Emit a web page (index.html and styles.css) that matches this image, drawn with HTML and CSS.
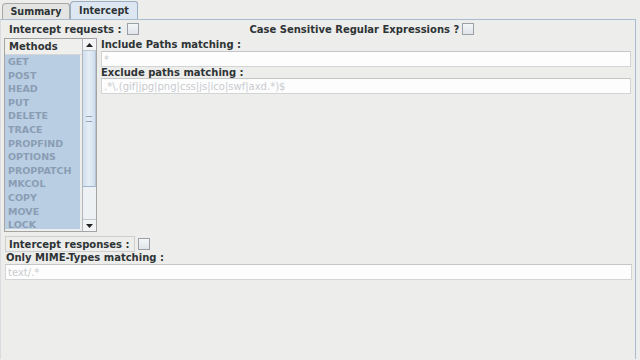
FILE: index.html
```html
<!DOCTYPE html>
<html>
<head>
<meta charset="utf-8">
<link rel="stylesheet" href="styles.css">
</head>
<body>
<div class="tabs">
  <div class="tab">Summary</div>
  <div class="tab active">Intercept</div>
</div>
<div class="panel">
  <div class="row1">
    <span class="lbl">Intercept requests :</span><span class="cb"></span>
    <span class="lbl case">Case Sensitive Regular Expressions ?</span><span class="cb"></span>
  </div>
  <div class="main">
    <div class="methods">
      <div class="mlist">
        <div class="mhead">Methods</div>
        <div class="items">
          <div class="item">GET</div>
          <div class="item">POST</div>
          <div class="item">HEAD</div>
          <div class="item">PUT</div>
          <div class="item">DELETE</div>
          <div class="item">TRACE</div>
          <div class="item">PROPFIND</div>
          <div class="item">OPTIONS</div>
          <div class="item">PROPPATCH</div>
          <div class="item">MKCOL</div>
          <div class="item">COPY</div>
          <div class="item">MOVE</div>
          <div class="item">LOCK</div>
        </div>
      </div>
      <div class="scroll">
        <div class="arrow"><svg width="7" height="4" viewBox="0 0 7 4"><path d="M0 4 L3.5 0 L7 4 Z" fill="#222"/></svg></div>
        <div class="track">
          <div class="thumb"><span class="grip"></span></div>
        </div>
        <div class="arrow down"><svg width="7" height="4" viewBox="0 0 7 4"><path d="M0 0 L3.5 4 L7 0 Z" fill="#222"/></svg></div>
      </div>
    </div>
    <div class="paths">
      <div class="flabel">Include Paths matching :</div>
      <div class="field first">*</div>
      <div class="flabel second">Exclude paths matching :</div>
      <div class="field">.*\.(gif|jpg|png|css|js|ico|swf|axd.*)$</div>
    </div>
  </div>
  <div class="resp">
    <span class="respbox">Intercept responses :</span><span class="cb"></span>
  </div>
  <div class="mlabel">Only MIME-Types matching :</div>
  <div class="field mime">text/.*</div>
</div>
</body>
</html>
```
FILE: styles.css
```css
html, body {
  margin: 0;
  padding: 0;
}
body {
  width: 640px;
  height: 360px;
  overflow: hidden;
  background: #ededeb;
  font-family: "DejaVu Sans", sans-serif;
  font-size: 10px;
  font-weight: bold;
  color: #2e3436;
}
.tabs {
  display: flex;
  align-items: flex-end;
  height: 19px;
  padding-left: 2px;
}
.tab {
  height: 15px;
  line-height: 15px;
  width: 66px;
  text-align: center;
  font-size: 9.6px;
  background: #e4e4e2;
  border: 1px solid #a8a8a6;
  border-bottom: none;
  border-radius: 4px 3px 0 0;
  color: #2e3436;
}
.tab.active {
  height: 17px;
  line-height: 18px;
  background: #dde7f1;
  border-color: #98aec6;
}
.panel {
  height: 340px;
  width: 636px;
  border-top: 1px solid #a9bbcf;
  border-right: 1px solid #a9bbcf;
  border-left: 1px solid #d8dcdf;
  box-sizing: border-box;
}
.row1 {
  display: flex;
  align-items: center;
  height: 18px;
  padding-left: 8px;
}
.cb {
  display: inline-block;
  width: 10px;
  height: 10px;
  border: 1px solid #9aa0a6;
  background: linear-gradient(#f4f6f8, #dfe4e9);
  margin-left: 6px;
}
.case {
  margin-left: 110px;
}
.row1 .case + .cb {
  margin-left: 3px;
}
.main {
  display: flex;
  padding-left: 3px;
  height: 194px;
}
.methods {
  display: flex;
  width: 93px;
  height: 194px;
  box-sizing: border-box;
  border: 1px solid #a4a4a2;
}
.mlist {
  flex: 1;
  display: flex;
  flex-direction: column;
  overflow: hidden;
}
.mhead {
  height: 15px;
  line-height: 15px;
  padding-left: 4px;
  border-bottom: 1px solid #d6d6d4;
  background: #efefed;
}
.items {
  flex: 1;
  background: #b9cde3;
  margin-right: 2px;
  margin-bottom: 2px;
  overflow: hidden;
}
.item {
  height: 13.6px;
  line-height: 13.6px;
  padding-left: 3px;
  font-size: 9.5px;
  color: #8a9db3;
  white-space: nowrap;
}
.scroll {
  width: 13px;
  display: flex;
  flex-direction: column;
  border-left: 1px solid #b0b6bc;
  background: #eef1f4;
}
.arrow {
  height: 12px;
  display: flex;
  align-items: center;
  justify-content: center;
  background: #f2f4f6;
  border-bottom: 1px solid #c0c6cc;
  box-sizing: border-box;
}
.arrow.down {
  border-bottom: none;
  border-top: 1px solid #c0c6cc;
}
.track {
  flex: 1;
  display: flex;
  flex-direction: column;
}
.thumb {
  height: 135px;
  background: linear-gradient(90deg, #cfdeed, #e6eef6 50%, #cfdeed);
  border-bottom: 1px solid #9fb4ca;
  border-right: 1px solid #b6c6d6;
  display: flex;
  align-items: center;
  justify-content: center;
}
.grip {
  width: 6px;
  height: 4px;
  border-top: 1px solid #8fa3b9;
  border-bottom: 1px solid #8fa3b9;
}
.paths {
  display: flex;
  flex-direction: column;
  margin-left: 4px;
  width: 530px;
}
.flabel {
  height: 12px;
  line-height: 13px;
}
.flabel.second {
  height: 11px;
  line-height: 11px;
}
.field {
  height: 16px;
  line-height: 15px;
  box-sizing: border-box;
  background: #fdfdfd;
  border: 1px solid #d2d4d6;
  border-top-color: #c4c6c8;
  padding-left: 2px;
  font-weight: normal;
  font-size: 10px;
  color: #c8ccd0;
  white-space: nowrap;
  overflow: hidden;
}
.field.first {
  margin-top: 1px;
}
.resp {
  display: flex;
  align-items: center;
  padding-left: 4px;
  margin-top: 3px;
  height: 17px;
}
.respbox {
  display: inline-block;
  height: 16px;
  line-height: 16px;
  width: 130px;
  box-sizing: border-box;
  padding-left: 3px;
  border: 1px solid #cfd0ce;
}
.resp .cb {
  margin-left: 3px;
}
.mlabel {
  height: 12px;
  line-height: 12px;
  padding-left: 5px;
}
.field.mime {
  margin-left: 4px;
  width: 627px;
}
```
